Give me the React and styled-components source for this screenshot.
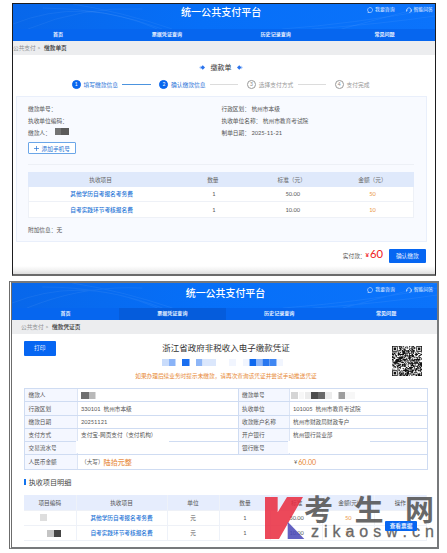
import React from "react";
import styled, { createGlobalStyle } from "styled-components";

const GlobalStyle = createGlobalStyle`
  * {
    box-sizing: border-box;
  }

  body {
    margin: 0;
    background: #fff;
    overflow: hidden;
    font-family: Lato, "Noto Sans CJK SC", sans-serif;
    font-size: 5.7px;
    line-height: 1;
    color: #555;
  }
`;

const Page = styled.main`
  width: 447px;
  height: 553px;
  padding-top: 3px;
`;

const OrderWindow = styled.section`
  width: 424px;
  height: 273px;
  margin-left: 12px;
  border: 1px solid #1d1d1f;
  border-bottom: 2px solid #6b6b6b;
  overflow: hidden;
  background: linear-gradient(#fff 262px, #f2f2f2 266px, #dedede 270px);
`;

const VoucherWindow = styled.section`
  position: relative;
  width: 430px;
  height: 268px;
  margin: 5px 0 0 9px;
  border: 2px solid #77797b;
  border-left: 3px double #6c6c6c;
  overflow: hidden;
  background: #fff;
`;

const Header = styled.header`
  position: relative;
  height: 25px;
  display: flex;
  justify-content: center;
  background: linear-gradient(100deg, #0867ea, #066ff8 45%, #0b73fb);
  color: #fff;
`;

const Swirl = styled.svg`
  position: absolute;
  inset: 0;
  width: 100%;
  height: 100%;
`;

const SiteTitle = styled.h1`
  position: relative;
  margin: 0;
  padding-top: ${(props) => props.$top};
  left: ${(props) => props.$shift || "0"};
  font-size: ${(props) => props.$size};
  font-weight: 500;
  line-height: 10px;
`;

const HelpLinks = styled.div`
  position: absolute;
  top: ${(props) => props.$top};
  right: ${(props) => props.$right};
  display: flex;
  gap: 11px;
`;

const HelpLink = styled.span`
  display: flex;
  align-items: center;
  gap: 1.8px;
  font-size: 4.9px;
  color: #e3efff;

  svg {
    width: 6px;
    height: 6px;
  }
`;

const Nav = styled.nav`
  display: grid;
  grid-template-columns: repeat(4, ${(props) => props.$tab});
  margin-left: ${(props) => props.$offset || "0"};
  height: 12px;
  background: #0666ef;
`;

const NavItem = styled.span`
  display: flex;
  align-items: center;
  justify-content: center;
  background: ${(props) => (props.$active ? "#055cdc" : "transparent")};
  color: #e6f0ff;
  font-size: 5.05px;
  font-weight: 700;
`;

const Breadcrumb = styled.div`
  height: 14px;
  padding-left: ${(props) => props.$left};
  display: flex;
  align-items: center;
  gap: 2.5px;
  background: #ecedef;
  color: #8e9092;

  b {
    margin-left: 1px;
    color: #333;
    font-weight: 500;
  }
`;

const OrderTitle = styled.h2`
  height: 25px;
  margin: 0;
  padding-right: 6px;
  display: flex;
  align-items: center;
  justify-content: center;
  gap: 5.5px;
  font-size: 7px;
  font-weight: 400;
  color: #333;

  svg {
    width: 6px;
    height: 5px;
  }
`;

const Steps = styled.div`
  height: 9px;
  margin: 0 0 7px 58.8px;
  display: flex;
  align-items: center;
`;

const Step = styled.div`
  display: flex;
  align-items: center;
  color: ${(props) => (props.$done ? "#2b73d8" : "#999")};
  font-size: 5.75px;
`;

const StepNumber = styled.i`
  width: 8.8px;
  height: 8.8px;
  margin-right: 2.8px;
  display: flex;
  align-items: center;
  justify-content: center;
  border: 0.8px solid ${(props) => (props.$done ? "#0866ee" : "#999")};
  border-radius: 50%;
  background: ${(props) => (props.$done ? "#0866ee" : "#fff")};
  color: ${(props) => (props.$done ? "#fff" : "#888")};
  font-size: 5px;
  font-style: normal;
`;

const StepLine = styled.span`
  width: 28.5px;
  height: 1px;
  margin: 0 8.8px 0 4.3px;
  background: ${(props) => (props.$done ? "#4c94df" : "#dcdcdc")};
`;

const Panel = styled.div`
  width: 411px;
  height: 146px;
  margin-left: 3px;
  padding: 5.8px 12px 0 11px;
  border: 1px solid #e9effb;
  background: #f8faff;
`;

const Facts = styled.div`
  display: grid;
  grid-template-columns: 193.5px 1fr;
  grid-auto-rows: 12.2px;
  align-items: center;
`;

const Fact = styled.div`
  display: flex;
  align-items: center;
  white-space: pre;
`;

const Redacted = styled.span`
  width: 14px;
  height: 7px;
  margin: -3px 0 0 4px;
  background: linear-gradient(90deg, #737373 45%, #5b5b5b 45%);
`;

const AddPhone = styled.button`
  width: 48px;
  height: 12px;
  margin-top: 3px;
  padding: 0;
  display: flex;
  align-items: center;
  justify-content: center;
  gap: 2.5px;
  border: 1px solid #6ba6e8;
  border-radius: 1px;
  background: #fff;
  color: #2472d4;
  font: inherit;

  svg {
    width: 5px;
    height: 5px;
  }
`;

const OrderTable = styled.div`
  margin-top: 9.5px;
  padding-top: 7px;
  border-top: 1px solid #edf0f6;
`;

const OrderRow = styled.div`
  display: grid;
  grid-template-columns: 145.2px 79.4px 78.3px 1fr;
  align-items: center;
  justify-items: center;
  height: 15.6px;
  border: 1px solid #eef1f7;
  border-top: 0;
  background: #fff;
`;

const OrderHead = styled(OrderRow)`
  height: 15px;
  border: 0;
  background: #dfe9fb;
  color: #666;
`;

const Link = styled.span`
  color: #2474d6;
  font-weight: 500;
`;

const Amount = styled.span`
  color: #ea9545;
`;

const Extra = styled.div`
  margin-top: 9px;
`;

const PayBar = styled.div`
  height: 27px;
  padding-right: 9px;
  display: flex;
  align-items: center;
  justify-content: flex-end;
`;

const Total = styled.strong`
  margin: -3px 5.5px 0 0;
  color: #ef2020;
  font-size: 11.2px;
  font-weight: 400;

  small {
    margin-right: 1px;
    font-size: 6px;
    font-weight: 700;
    vertical-align: 1px;
  }
`;

const PrimaryButton = styled.button`
  width: ${(props) => props.$width};
  height: ${(props) => props.$height};
  padding: 0;
  border: 0;
  border-radius: 1px;
  background: #0666f2;
  color: #e9f2ff;
  font: inherit;
`;

const VoucherTop = styled.div`
  display: grid;
  grid-template-columns: 63px 1fr 57px;
  height: 54px;
  padding: 7px 15px 0 12px;
`;

const VoucherHeading = styled.div`
  display: flex;
  flex-direction: column;
  align-items: center;

  h2 {
    margin: 2.5px 0 0;
    font-size: 8.5px;
    font-weight: 400;
    color: #333;
    line-height: 9px;
  }

  p {
    margin: 7.5px 0 0;
    font-size: 5.68px;
    color: #e78936;
    white-space: nowrap;
  }
`;

const Mosaic = styled.div`
  width: 122px;
  height: 7px;
  margin: 6px 6px 0 0;
`;

const QrCell = styled.div`
  display: flex;
  justify-content: flex-end;
  padding: 5px 0 0;

  svg {
    width: 30px;
    height: 30px;
  }
`;

const InfoTable = styled.div`
  width: 403.5px;
  margin: 0 0 0 12px;
  border: 1px solid #cfdcf2;
  border-bottom: 0;
`;

const InfoRow = styled.div`
  display: grid;
  grid-template-columns: ${(props) =>
    props.$total ? "52.5px 213px 1fr" : "52.5px 160px 52px 1fr"};
  height: ${(props) => (props.$total ? "14.6px" : "13.25px")};
  border-bottom: 1px solid #cfdcf2;
`;

const InfoCell = styled.div`
  display: flex;
  align-items: center;
  padding-left: 3.5px;
  white-space: pre;
  font-size: 5.65px;
`;

const InfoLabel = styled(InfoCell)`
  background: #f4f7ff;
  border-right: 1px solid #dce5f5;
  border-left: ${(props) => (props.$second ? "1px solid #cfdcf2" : "0")};
`;

const Erased = styled.span`
  align-self: flex-start;
  width: ${(props) => props.$width};
  height: 12px;
  margin: -1.5px 0 0 -5px;
  background: #fff;
`;

const Words = styled.b`
  color: #e8914a;
  font-size: 7.1px;
  font-weight: 500;
`;

const Money = styled.span`
  margin-left: 1px;
  color: #e8852f;
  font-size: 7px;
`;

const SectionTitle = styled.h3`
  height: 25.5px;
  margin: 0 0 0 12px;
  padding-bottom: 1px;
  display: flex;
  align-items: center;
  gap: 3px;
  color: #444;
  font-size: 7.1px;
  font-weight: 400;

  &::before {
    content: "";
    width: 1.7px;
    height: 6.5px;
    background: #1273ee;
  }
`;

const DetailTable = styled.div`
  position: relative;
  width: 403px;
  margin-left: 12px;
`;

const DetailRow = styled.div`
  display: grid;
  grid-template-columns: 52.5px 91px 52px 51.8px 51.7px 51.7px 1fr;
  height: 15.3px;
  border-bottom: 1px solid #eef1f7;
  font-size: 5.67px;
  background: ${(props) => (props.$head ? "#e6edfd" : "#fff")};
`;

const DetailCell = styled.div`
  display: flex;
  align-items: center;
  justify-content: center;
  border-right: 1px solid #eef2f9;
`;

const ViewButton = styled.div`
  position: absolute;
  right: 10px;
  top: 25.5px;
  z-index: 2;
  font-weight: 700;
`;

const Watermark = styled.div`
  position: absolute;
  left: 253px;
  top: 212px;
  z-index: 1;
  display: grid;
  grid-template-columns: 39px 130px;
  opacity: 0.86;
  color: #505050;

  svg {
    width: 40px;
    height: 44px;
  }
`;

const WatermarkName = styled.div`
  height: 29px;
  display: flex;
  justify-content: space-between;
  font-size: 29px;
  font-weight: 600;
  line-height: 29px;
`;

const WatermarkSite = styled.div`
  margin-left: 7px;
  display: flex;
  justify-content: space-between;
  font-family: "Liberation Sans", sans-serif;
  font-size: 16px;
  line-height: 16px;
  -webkit-text-stroke: 0.3px #505050;
`;

const ChatIcon = () => (
  <svg viewBox="0 0 12 12" fill="none" stroke="currentColor" strokeWidth="1.2">
    <path d="M3.2 10A5 5 0 1 1 6 11H1.6L3.2 10" />
  </svg>
);

const HeadsetIcon = () => (
  <svg viewBox="0 0 12 12" fill="none" stroke="currentColor" strokeWidth="1.2">
    <path d="M2 8V5.5a4 4 0 0 1 8 0V8M2 5.5H.8v3H2M10 5.5h1.2v3H10M10 8q0 3-3.5 3" />
  </svg>
);

const Ornament = ({ flip }) => (
  <svg viewBox="0 0 12 10">
    <g transform={flip ? "translate(12 0) scale(-1 1)" : undefined}>
      <path d="M0 5 4 1v8z" fill="#b9d2fb" />
      <path d="M3 5 7.5.6 12 5 7.5 9.4z" fill="#2a73ec" />
    </g>
  </svg>
);

const TopBar = ({ size, top, helpTop, helpRight, shift }) => (
  <Header>
    <Swirl viewBox="0 0 424 25" preserveAspectRatio="none">
      <g fill="none" stroke="#fff" strokeOpacity=".06">
        <path d="M0 20Q70-8 145 25M15 25Q70 2 130 5M30 4Q95 4 150 25M60 0Q110 8 160 25" />
        <path d="M270 25Q340 20 424 5M300 25Q370 20 424 12M330 25 424 0" />
      </g>
    </Swirl>
    <SiteTitle $size={size} $top={top} $shift={shift}>
      统一公共支付平台
    </SiteTitle>
    <HelpLinks $top={helpTop} $right={helpRight}>
      <HelpLink>
        <ChatIcon />
        我要咨询
      </HelpLink>
      <HelpLink>
        <HeadsetIcon />
        智能问答
      </HelpLink>
    </HelpLinks>
  </Header>
);

const tabs = ["首页", "票据凭证查询", "历史记录查询", "常见问题"];

const MainNav = ({ tab, offset, active }) => (
  <Nav $tab={tab} $offset={offset}>
    {tabs.map((name, i) => (
      <NavItem key={name} $active={i === active}>
        {name}
      </NavItem>
    ))}
  </Nav>
);

const steps = ["填写缴款信息", "确认缴款信息", "选择支付方式", "支付完成"];

const StepBar = () => (
  <Steps>
    {steps.map((name, i) => (
      <Step key={name} $done={i < 2}>
        <StepNumber $done={i < 2}>{i + 1}</StepNumber>
        {name}
        {i < 3 && <StepLine $done={i < 1} />}
      </Step>
    ))}
  </Steps>
);

const N = 37;

// finder squares sit in three corners, null means a data module
const inFinder = (x, y) => {
  const right = x > N - 9;
  const bottom = y > N - 9;
  if ((x > 7 && !right) || (y > 7 && !bottom) || (right && bottom)) return null;
  const fx = right ? N - 1 - x : x;
  const fy = bottom ? N - 1 - y : y;
  if (fx === 7 || fy === 7) return false;
  return Math.max(Math.abs(fx - 3), Math.abs(fy - 3)) !== 2;
};

const qrPath = () => {
  let seed = 17;
  let d = "";
  for (let y = 0; y < N; y++) {
    for (let x = 0; x < N; x++) {
      seed = (seed * 16807) % 2147483647;
      const finder = inFinder(x, y);
      if (finder === null ? seed / 2147483647 > 0.42 : finder) {
        d += `M${x} ${y}h1v1h-1z`;
      }
    }
  }
  return d;
};

const QrCode = () => (
  <svg viewBox={`0 0 ${N} ${N}`}>
    <path d={qrPath()} fill="#111" />
  </svg>
);

const Blocks = ({ items, width }) => (
  <svg width={width} height="7">
    {items.map(([x, w, fill]) => (
      <rect key={x} x={x} width={w} height="7" fill={fill} />
    ))}
  </svg>
);

const Nudge = styled.span`
  display: flex;
  margin-left: ${(props) => props.$by};
`;

const voucherNumber = [
  [0, 7, "#c9dcfb"],
  [7, 6.5, "#8ab3f7"],
  [20, 7.5, "#1a6ff0"],
  [34, 6.5, "#8eb6f7"],
  [40.5, 13.5, "#dbe7fc"],
  [67, 7, "#f1f5fe"],
  [81, 6, "#f1f5fe"],
  [87.5, 7, "#0e68ee"],
  [94.5, 6, "#8db5f7"],
  [100.5, 7, "#2877f0"],
  [107.5, 7, "#3f86f2"],
  [115, 6, "#f1f5fe"],
];

const payer = [
  [0, 8, "#6f6f6f"],
  [8, 6.5, "#b9b9b9"],
];

const orderNumber = [
  [0, 7, "#d5d5d5"],
  [8, 5, "#f7f7f7"],
  [14, 6, "#ececec"],
  [20, 7, "#4d4d4d"],
  [27, 7, "#696969"],
  [34, 7, "#ececec"],
  [47.5, 6.5, "#9d9d9d"],
  [54, 10, "#f7f7f7"],
];

const info = [
  [
    "缴款人",
    <Blocks width={15} items={payer} />,
    "缴款单号",
    <Nudge $by="-2.5px">
      <Blocks width={72} items={orderNumber} />
    </Nudge>,
  ],
  ["行政区划", "330101  杭州市本级", "执收单位", "101005  杭州市教育考试院"],
  ["缴款日期", "20251121", "收款账户名称", "杭州市财政局财政专户"],
  ["支付方式", "支付宝-网页支付（支付机构）", "开户银行", "杭州银行营业部"],
  [
    "交易流水号",
    <Erased $width="93px" />,
    "银行账号",
    <Erased $width="82px" />,
  ],
];

const OrderPage = () => (
  <OrderWindow>
    <TopBar
      size="10.06px"
      top="3px"
      helpTop="2.5px"
      helpRight="2px"
      shift="-2.8px"
    />
    <MainNav tab="108.8px" offset="-9.3px" />
    <Breadcrumb $left="0">
      <span>公共支付 &gt;</span>
      <b>缴款单页</b>
    </Breadcrumb>
    <OrderTitle>
      <Ornament />
      缴款单
      <Ornament flip />
    </OrderTitle>
    <StepBar />
    <Panel>
      <Facts>
        <Fact>缴款单号：</Fact>
        <Fact>行政区划： 杭州市本级</Fact>
        <Fact>执收单位编码：</Fact>
        <Fact>执收单位名称： 杭州市教育考试院</Fact>
        <Fact>
          缴款人：
          <Redacted />
        </Fact>
        <Fact>制单日期： 2025-11-21</Fact>
      </Facts>
      <AddPhone>
        <svg viewBox="0 0 10 10" stroke="currentColor" strokeWidth="1.4">
          <path d="M5 0v10M0 5h10" />
        </svg>
        添加手机号
      </AddPhone>
      <OrderTable>
        <OrderHead>
          <span>执收项目</span>
          <span>数量</span>
          <span>标准（元）</span>
          <span>金额（元）</span>
        </OrderHead>
        <OrderRow>
          <Link>其他学历自考报名考务费</Link>
          <span>1</span>
          <span>50.00</span>
          <Amount>50</Amount>
        </OrderRow>
        <OrderRow>
          <Link>自考实践环节考核报名费</Link>
          <span>1</span>
          <span>10.00</span>
          <Amount>10</Amount>
        </OrderRow>
      </OrderTable>
      <Extra>附加信息：无</Extra>
    </Panel>
    <PayBar>
      实付款：
      <Total>
        <small>¥</small>60
      </Total>
      <PrimaryButton $width="37.5px" $height="14px">
        确认缴款
      </PrimaryButton>
    </PayBar>
  </OrderWindow>
);

const VoucherPage = () => (
  <VoucherWindow>
    <TopBar
      size="9.95px"
      top="4.5px"
      helpTop="3.5px"
      helpRight="3.8px"
      shift="1px"
    />
    <MainNav tab="106.9px" active={1} />
    <Breadcrumb $left="9px">
      <span>公共支付 &gt;</span>
      <b>缴款凭证页</b>
    </Breadcrumb>
    <VoucherTop>
      <PrimaryButton $width="31.5px" $height="14.5px">
        打印
      </PrimaryButton>
      <VoucherHeading>
        <h2>浙江省政府非税收入电子缴款凭证</h2>
        <Mosaic>
          <Blocks width={122} items={voucherNumber} />
        </Mosaic>
        <p>如果办理后续业务时提示未缴款，请再次查询该凭证并尝试手动推送凭证</p>
      </VoucherHeading>
      <QrCell>
        <QrCode />
      </QrCell>
    </VoucherTop>
    <InfoTable>
      {info.map(([label, value, label2, value2]) => (
        <InfoRow key={label}>
          <InfoLabel>{label}</InfoLabel>
          <InfoCell>{value}</InfoCell>
          <InfoLabel $second>{label2}</InfoLabel>
          <InfoCell>{value2}</InfoCell>
        </InfoRow>
      ))}
      <InfoRow $total>
        <InfoLabel>人民币金额</InfoLabel>
        <InfoCell>
          （大写）<Words>陆拾元整</Words>
        </InfoCell>
        <InfoCell>
          ¥<Money>60.00</Money>
        </InfoCell>
      </InfoRow>
    </InfoTable>
    <SectionTitle>执收项目明细</SectionTitle>
    <DetailTable>
      <DetailRow $head>
        {["项目编码", "执收项目", "单位", "数量", "标准", "金额(元)", "操作"].map(
          (name) => (
            <DetailCell key={name}>{name}</DetailCell>
          )
        )}
      </DetailRow>
      <DetailRow>
        <DetailCell>
          <Nudge $by="-13px">
            <Blocks width={7} items={[[0, 7, "#dedede"]]} />
          </Nudge>
        </DetailCell>
        <DetailCell>
          <Link>其他学历自考报名考务费</Link>
        </DetailCell>
        <DetailCell>元</DetailCell>
        <DetailCell>1</DetailCell>
        <DetailCell>50.00</DetailCell>
        <DetailCell>
          <Amount>50</Amount>
        </DetailCell>
        <DetailCell />
      </DetailRow>
      <DetailRow>
        <DetailCell>
          <Nudge $by="8px">
            <Blocks
              width={14}
              items={[
                [0, 7, "#c4c4c4"],
                [7, 7, "#444"],
              ]}
            />
          </Nudge>
        </DetailCell>
        <DetailCell>
          <Link>自考实践环节考核报名费</Link>
        </DetailCell>
        <DetailCell>元</DetailCell>
        <DetailCell>1</DetailCell>
        <DetailCell>10.00</DetailCell>
        <DetailCell>
          <Amount>10</Amount>
        </DetailCell>
        <DetailCell />
      </DetailRow>
      <ViewButton>
        <PrimaryButton $width="32px" $height="10.5px">
          查看票据
        </PrimaryButton>
      </ViewButton>
    </DetailTable>
    <Watermark>
      <svg viewBox="0 0 120 132">
        <path d="M0 6H38V52L66 6H114L42 132H0Z" fill="#ea2c40" />
        <path d="M68 80 118 132H68Z" fill="#4a48b8" />
      </svg>
      <div>
        <WatermarkName>
          {[..."考生网"].map((char) => (
            <span key={char}>{char}</span>
          ))}
        </WatermarkName>
        <WatermarkSite>
          {[..."zikaosw.cn"].map((char) => (
            <span key={char}>{char}</span>
          ))}
        </WatermarkSite>
      </div>
    </Watermark>
  </VoucherWindow>
);

const App = () => {
  return (
    <>
      <GlobalStyle />
      <Page>
        <OrderPage />
        <VoucherPage />
      </Page>
    </>
  );
};

export default App;
